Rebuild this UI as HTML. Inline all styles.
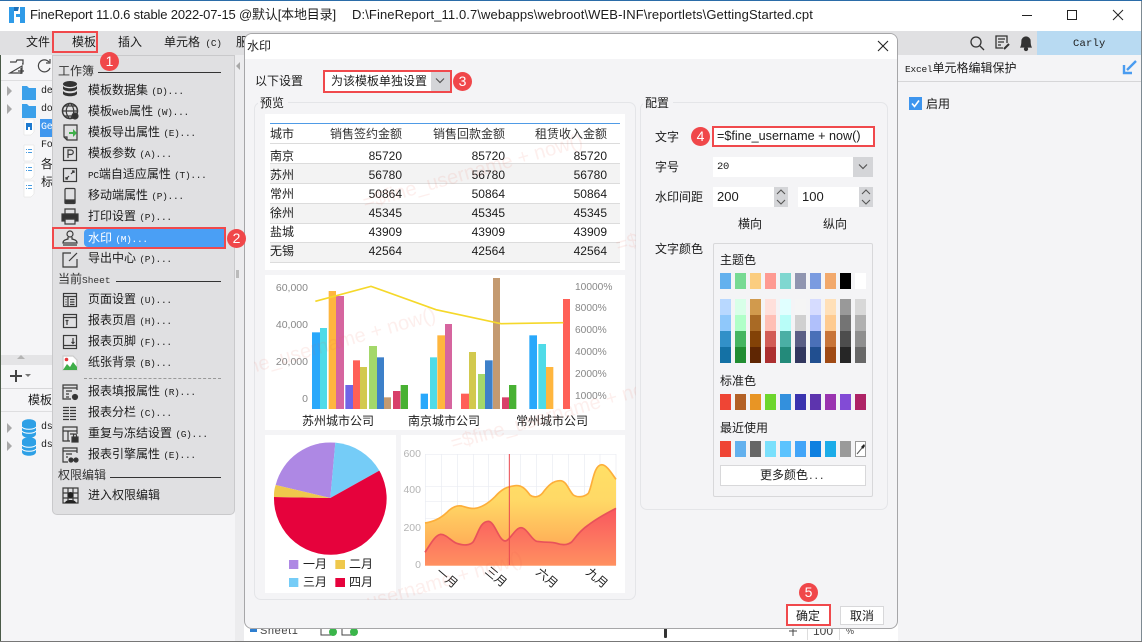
<!DOCTYPE html>
<html lang="zh"><head><meta charset="utf-8"><title>FineReport</title>
<style>
*{box-sizing:border-box;margin:0;padding:0}
html,body{width:1142px;height:642px;overflow:hidden;background:#fff}
body{position:relative;font:12px/14px "Liberation Sans","Noto Sans CJK SC",sans-serif;color:#1c1c1c}
.a{position:absolute}
.t{position:absolute;white-space:nowrap;line-height:14px}
.m{font-family:"Liberation Mono","Noto Sans CJK SC",monospace;font-size:9.5px;letter-spacing:-.3px}
.red{position:absolute;border:2px solid #f0494c}
.c{position:absolute;width:19px;height:19px;border-radius:50%;background:#f0474a;color:#fff;font-size:14px;line-height:19px;text-align:center}
.sw{position:absolute;left:720px;display:flex;gap:4px}
.sw i{display:block;width:11px;height:16px}
.tr{position:absolute;left:270px;width:350px;border-bottom:1px solid #dcdcdc}
.n{position:absolute;white-space:nowrap;text-align:right;width:60px}
.g{background:#f3f3f3}
.ax{font-size:10.5px;color:#888}
.ar{font-size:10.2px;color:#888}
.ay{font-size:10.5px;color:#b4b4b4}
svg{position:absolute;display:block}
</style></head><body>

<!-- window -->
<div class="a" style="left:0;top:0;width:1142px;height:1px;background:#2b6ca8"></div>
<div class="a" style="left:0;top:31px;width:1142px;height:24px;background:#e0e0e2"></div>
<div class="a" style="left:1037px;top:31px;width:104px;height:24px;background:#b8daf2"></div>
<div class="a" style="left:1141px;top:1px;width:1px;height:641px;background:#7d8a92"></div>
<div class="a" style="left:0;top:55px;width:1px;height:587px;background:#4a5a48"></div>

<svg style="left:8px;top:6px" width="18" height="18" viewBox="0 0 18 18"><path d="M1 1h5v16H1z" fill="#2f9be8"/><path d="M6 1h5l-1 4H6z" fill="#1c6fb8"/><path d="M12 1h5v16h-5v-6H8V8h4z" fill="#2f9be8"/></svg>
<div class="t" style="left:30px;top:8px;font-size:13px;letter-spacing:-.17px">FineReport 11.0.6 stable 2022-07-15 @默认[本地目录]</div>
<div class="t" style="left:352px;top:8px;font-size:13px;letter-spacing:.1px">D:\FineReport_11.0.7\webapps\webroot\WEB-INF\reportlets\GettingStarted.cpt</div>
<svg style="left:1015px;top:6px" width="115" height="18" viewBox="0 0 115 18" fill="none" stroke="#222" stroke-width="1"><path d="M7 9.5h10"/><rect x="52.5" y="4.500" width="9" height="9"/><path d="M98 4l10 10M108 4l-10 10"/></svg>

<div class="t" style="left:26px;top:35px">文件</div>
<div class="t" style="left:72px;top:35px">模板</div>
<div class="t" style="left:118px;top:35px">插入</div>
<div class="t" style="left:164px;top:35px">单元格<span class="m"> (C)</span></div>
<div class="t" style="left:236px;top:35px">服</div>

<svg style="left:968px;top:33px" width="65" height="20" viewBox="0 0 65 20" fill="none" stroke="#333" stroke-width="1.300"><circle cx="8" cy="9" r="5"/><path d="M12 13l4 4"/><path d="M35 15h-7V3h11v7M30 6h7M30 9h6M30 12h3"/><path d="M36 16l5-5" stroke-width="2"/><path d="M53 14c1-2 1-3 1-6a4 4 0 0 1 8 0c0 3 0 4 1 6z" fill="#333"/><circle cx="58" cy="16" r="1.500" fill="#333"/></svg>
<div class="t m" style="left:1073px;top:37px;font-size:10.5px;letter-spacing:.2px">Carly</div>

<!-- right panel -->
<div class="a" style="left:898px;top:55px;width:243px;height:587px;background:#f4f4f6"></div>
<div class="a" style="left:898px;top:81px;width:243px;height:1px;background:#d6d6d8"></div>
<div class="t" style="left:905px;top:61px"><span class="m" style="letter-spacing:-.2px">Excel</span>单元格编辑保护</div>
<svg style="left:1122px;top:60px" width="16" height="15" viewBox="0 0 16 15"><path d="M14 1L5 10M2 5v8h8" fill="none" stroke="#4a9cf0" stroke-width="2.400"/></svg>
<svg style="left:909px;top:97px" width="13" height="13" viewBox="0 0 13 13"><rect width="13" height="13" fill="#3d95ee"/><path d="M3 6.500l2.500 3L10 3.500" fill="none" stroke="#fff" stroke-width="1.600"/></svg>
<div class="t" style="left:926px;top:97px">启用</div>

<!-- left panel -->
<div class="a" style="left:1px;top:55px;width:243px;height:587px;background:#f5f5f7"></div>
<div class="a" style="left:235px;top:55px;width:9px;height:587px;background:#ececee"></div>
<svg style="left:235px;top:60px" width="9" height="300" viewBox="0 0 9 300"><path d="M5 2L1 6l4 4z" fill="#a8a8a8"/><path d="M1 210h3v8H1z" fill="#bbb"/></svg>
<div class="a" style="left:1px;top:80px;width:51px;height:1px;background:#dedee0"></div>
<div class="a" style="left:1px;top:355px;width:51px;height:10px;background:#e4e4e6"></div>
<div class="a" style="left:1px;top:388px;width:51px;height:1px;background:#d8d8da"></div>
<div class="a" style="left:1px;top:411px;width:51px;height:1px;background:#dedee0"></div>
<div class="a" style="left:40px;top:119px;width:12px;height:18px;background:#3f97ee"></div>
<svg style="left:0;top:55px" width="52" height="410" viewBox="0 0 52 410">
<g fill="none" stroke="#444" stroke-width="1.200"><path d="M10 7h6l1-2h6v4h-1M22 11v7H10z"/><path d="M21 13v6M18 16h6"/><path d="M49 7a6 6 0 1 0 1 6M50 4v4h-4"/></g>
<path d="M7 31l5 5-5 5zM7 49l5 5-5 5zM7 368l5 5-5 5zM7 386l5 5-5 5z" fill="#a8a8a8"/>
<path d="M22 31h5l2 2h7v12H22zM22 49h5l2 2h7v12H22z" fill="#3ba0ea"/>
<g fill="#fff" stroke="#ddd" stroke-width=".5"><path d="M24 64h10v13l-3 3h-7zM24 90h10v13l-3 3h-7zM24 108h10v13l-3 3h-7zM24 126h10v13l-3 3h-7z" transform="translate(0,0)"/></g>
<path d="M26 68h6v7h-2v-3h-2v3h-2z" fill="#1d7ad0"/>
<path d="M26 94h1v1h-1zM28 94h4v1h-4zM26 97h1v1h-1zM28 97h4v1h-4zM26 112h1v1h-1zM28 112h4v1h-4zM26 115h1v1h-1zM28 115h4v1h-4zM26 130h1v1h-1zM28 130h4v1h-4zM26 133h1v1h-1zM28 133h4v1h-4z" fill="#4a9ce0"/>
<path d="M10 321h12M16 315v12" stroke="#444" stroke-width="2" fill="none"/>
<path d="M25 319h6l-3 3z" fill="#777"/>
<path d="M22 368c0-5 14-5 14 0v11c0 5-14 5-14 0zM22 386c0-5 14-5 14 0v11c0 5-14 5-14 0z" fill="#2ea0e6"/>
<path d="M22 372c2 3 12 3 14 0M22 376c2 3 12 3 14 0M22 390c2 3 12 3 14 0M22 394c2 3 12 3 14 0" fill="none" stroke="#fff"/>
<path d="M17 304l4-4 4 4z" fill="#b4b4b4"/>
</svg>
<div class="t m" style="left:41px;top:85px;font-size:10px">de</div>
<div class="t m" style="left:41px;top:103px;font-size:10px">do</div>
<div class="t m" style="left:41px;top:121px;font-size:10px;color:#fff">Ge</div>
<div class="t m" style="left:41px;top:139px;font-size:10px">Fo</div>
<div class="t" style="left:41px;top:157px">各</div>
<div class="t" style="left:41px;top:175px">标</div>
<div class="t" style="left:28px;top:393px">模板</div>
<div class="t m" style="left:41px;top:421px;font-size:10px">ds</div>
<div class="t m" style="left:41px;top:439px;font-size:10px">ds</div>

<!-- bottom strip -->
<div class="a" style="left:244px;top:628px;width:654px;height:13px;background:#fff"></div>
<div class="a" style="left:0;top:641px;width:1142px;height:1px;background:#777"></div>
<div class="a" style="left:250px;top:629px;width:7px;height:3px;background:#2f7fd0"></div>
<div class="t" style="left:260px;top:624px;font-size:11px;color:#444;letter-spacing:.6px">Sheet1</div>
<svg style="left:318px;top:628px" width="560" height="13" viewBox="0 0 560 13"><g fill="none" stroke="#444"><rect x="3" y="0" width="10" height="7"/><rect x="24" y="0" width="10" height="7"/></g><circle cx="15" cy="4" r="4" fill="#3ab54a"/><circle cx="36" cy="4" r="4" fill="#3ab54a"/><rect x="346" y="0" width="3" height="10" rx="1" fill="#333"/><path d="M475 0v8M471 3h8" stroke="#444"/></svg>
<div class="a" style="left:807px;top:628px;width:33px;height:12px;background:#fff;border-left:1px solid #ddd;border-right:1px solid #ddd"></div>
<div class="t" style="left:813px;top:624px;color:#444">100</div>
<div class="t" style="left:846px;top:624px;font-size:9px;color:#444">%</div>

<!-- menu -->
<div class="a" style="left:52px;top:55px;width:183px;height:460px;background:#e0e0e2;border:1px solid #c9c9cb;border-radius:0 0 5px 5px"></div>
<div class="a" style="left:84px;top:229px;width:140px;height:18px;background:#4a9ff5;border-radius:4px 0 0 4px"></div>
<div class="t" style="left:58px;top:64px;color:#333">工作簿</div><div class="a" style="left:98px;top:72px;width:123px;height:1px;background:#333"></div>
<div class="t" style="left:58px;top:272px;color:#333">当前<span class="m" style="letter-spacing:0">Sheet</span></div><div class="a" style="left:116px;top:281px;width:105px;height:1px;background:#333"></div>
<div class="a" style="left:84px;top:378px;width:137px;height:0;border-top:1px dashed #999"></div>
<div class="t" style="left:58px;top:468px;color:#333">权限编辑</div><div class="a" style="left:110px;top:477px;width:111px;height:1px;background:#333"></div>

<div class="t" style="left:88px;top:83px">模板数据集 <span class="m">(D)...</span></div>
<div class="t" style="left:88px;top:104px">模板<span class="m" style="letter-spacing:0">Web</span>属性 <span class="m">(W)...</span></div>
<div class="t" style="left:88px;top:125px">模板导出属性 <span class="m">(E)...</span></div>
<div class="t" style="left:88px;top:146px">模板参数 <span class="m">(A)...</span></div>
<div class="t" style="left:88px;top:167px"><span class="m">PC</span>端自适应属性 <span class="m">(T)...</span></div>
<div class="t" style="left:88px;top:188px">移动端属性 <span class="m">(P)...</span></div>
<div class="t" style="left:88px;top:209px">打印设置 <span class="m">(P)...</span></div>
<div class="t" style="left:88px;top:231px;color:#fff">水印 <span class="m">(M)...</span></div>
<div class="t" style="left:88px;top:251px">导出中心 <span class="m">(P)...</span></div>
<div class="t" style="left:88px;top:292px">页面设置 <span class="m">(U)...</span></div>
<div class="t" style="left:88px;top:313px">报表页眉 <span class="m">(H)...</span></div>
<div class="t" style="left:88px;top:334px">报表页脚 <span class="m">(F)...</span></div>
<div class="t" style="left:88px;top:355px">纸张背景 <span class="m">(B)...</span></div>
<div class="t" style="left:88px;top:384px">报表填报属性 <span class="m">(R)...</span></div>
<div class="t" style="left:88px;top:405px">报表分栏 <span class="m">(C)...</span></div>
<div class="t" style="left:88px;top:426px">重复与冻结设置 <span class="m">(G)...</span></div>
<div class="t" style="left:88px;top:447px">报表引擎属性 <span class="m">(E)...</span></div>
<div class="t" style="left:88px;top:488px">进入权限编辑</div>

<svg style="left:60px;top:80px" width="22" height="425" viewBox="0 0 22 425" fill="none" stroke="#3a3a3a" stroke-width="1.200">
<g fill="#333" stroke="none"><ellipse cx="10" cy="4" rx="7" ry="3"/><path d="M3 6c2 3 12 3 14 0v3c-2 3-12 3-14 0zM3 11c2 3 12 3 14 0v3c-2 3-12 3-14 0z"/></g>
<g transform="translate(0,21)"><circle cx="10" cy="10" r="7.500" stroke-width="1.500"/><path d="M2 10h16M10 2c-5 5-5 11 0 16M10 2c5 5 5 11 0 16M4 5h12M4 15h12"/><circle cx="15" cy="15" r="3" fill="#333"/></g>
<g transform="translate(0,43)"><path d="M4 2h13v15H7l-3-3zM4 14h3v3"/><path d="M9 9h4V6l4 4-4 4v-3H9z" fill="#3fb04a" stroke="none"/></g>
<g transform="translate(0,64)"><rect x="3.500" y="3.500" width="13" height="13"/><path d="M8 14V6h3a2 2 0 0 1 0 4.500H8"/></g>
<g transform="translate(0,85)"><rect x="3.500" y="3.500" width="13" height="13"/><path d="M11 9l3-3M12 6h2v2M9 11l-3 3M6 12v2h2"/></g>
<g transform="translate(0,106)"><rect x="5" y="2.500" width="10" height="15" rx="1"/><path d="M5 14h10v3H5z" fill="#333"/></g>
<g transform="translate(0,127)"><path d="M5 2h10v5H5z"/><path d="M2 7h16v7h-3v-2H5v2H2z" fill="#333"/><path d="M5 12h10v5H5z"/></g>
<g transform="translate(0,149)"><circle cx="10" cy="5" r="3"/><path d="M8 8v2c-4 1-5 2-5 4h14c0-2-1-3-5-4V8M3 16h14"/></g>
<g transform="translate(0,170)"><path d="M17 9v8H3V3h8M9 11l8-8"/></g>
<g transform="translate(0,210)"><rect x="3.500" y="3.500" width="13" height="13"/><path d="M3.500 6.500h13M8 6.500v10M10 9.500h4.500M10 12h4.500M10 14.500h4.500M5.500 9.500h1M5.500 12h1M5.500 14.500h1"/></g>
<g transform="translate(0,231)"><rect x="3.500" y="3.500" width="13" height="13"/><path d="M3.500 6.500h13M7 9v5M5.500 9.500h3"/></g>
<g transform="translate(0,252)"><rect x="3.500" y="3.500" width="13" height="13"/><path d="M3.500 13.500h13M13 6v5M11.500 10l1.500 1.500 1.500-1.500"/></g>
<g transform="translate(0,273)"><path d="M3 3h10l4 4v10H3z" fill="#fff" stroke="#ccc"/><circle cx="6.500" cy="6.500" r="1.800" fill="#e5383b" stroke="none"/><path d="M3 17l4-6 3 3 3-5 4 5v3z" fill="#3fae49" stroke="none"/></g>
<g transform="translate(0,302)"><path d="M17 8V3H3v14h8M3 6h14M6 9h6M6 12h3M6 15h3"/><circle cx="15" cy="15" r="2.500" fill="#333"/></g>
<g transform="translate(0,323)"><path d="M3 4.500h14M3 7.500h14M3 10.500h14M3 13.500h14M3 16.500h14" stroke-dasharray="6 1"/></g>
<g transform="translate(0,344)"><path d="M10 17H3V3h14v7M3 7h14M8 7v10M10 10h4"/><rect x="12" y="13" width="6" height="5" fill="#333"/><path d="M13.500 13v-1.500a1.500 1.500 0 0 1 3 0V13"/></g>
<g transform="translate(0,365)"><path d="M17 8V3H3v14h5M3 6h14M6 9h6M6 12h2"/><circle cx="11" cy="15" r="2" fill="#333"/><circle cx="16" cy="15" r="2" fill="#333"/></g>
<g transform="translate(0,405)"><path d="M3 3h15v15H3zM3 8h15M3 13h15M8 3v15M13 3v15"/><circle cx="10.500" cy="10" r="3" fill="#222" stroke="none"/><path d="M5 18c0-4 11-4 11 0z" fill="#222" stroke="none"/></g>
</svg>

<!-- dialog -->
<div class="a" style="left:244px;top:33px;width:654px;height:596px;background:#f4f4f6;border:1px solid #a6a6a8;border-radius:8px;overflow:hidden"><div style="height:25px;background:#fff"></div></div>
<div class="t" style="left:247px;top:39px">水印</div>
<svg style="left:877px;top:40px" width="12" height="12" viewBox="0 0 12 12"><path d="M1 1l10 10M11 1L1 11" stroke="#222" stroke-width="1.100"/></svg>

<div class="t" style="left:255px;top:74px">以下设置</div>
<div class="a" style="left:325px;top:71px;width:125px;height:20px;background:#fff"></div>
<div class="a" style="left:431px;top:71px;width:19px;height:20px;background:#d4d5d8"></div>
<svg style="left:434px;top:77px" width="12" height="8" viewBox="0 0 12 8"><path d="M2 1.500l4 4 4-4" fill="none" stroke="#555" stroke-width="1.200"/></svg>
<div class="t" style="left:331px;top:74px">为该模板单独设置</div>
<div class="red" style="left:323px;top:70px;width:129px;height:23px"></div>

<!-- preview fieldset -->
<div class="a" style="left:254px;top:102px;width:382px;height:498px;border:1px solid #e4e5e8;border-radius:7px"></div>
<div class="a" style="left:258px;top:98px;width:30px;height:8px;background:#f4f4f6"></div>
<div class="t" style="left:260px;top:96px">预览</div>
<div class="a" style="left:265px;top:114px;width:360px;height:156px;background:#fff"></div>
<div class="a" style="left:265px;top:275px;width:360px;height:155px;background:#fff"></div>
<div class="a" style="left:265px;top:435px;width:131px;height:158px;background:#fff"></div>
<div class="a" style="left:401px;top:435px;width:224px;height:158px;background:#fff"></div>

<!-- table -->
<div class="tr" style="top:124px;height:20px"></div>
<div class="tr" style="top:144px;height:20px"></div>
<div class="tr g" style="top:164px;height:20px"></div>
<div class="tr" style="top:184px;height:20px"></div>
<div class="tr g" style="top:204px;height:20px"></div>
<div class="tr" style="top:224px;height:19px"></div>
<div class="tr g" style="top:243px;height:20px"></div>
<div class="a" style="left:270px;top:123px;width:350px;height:1px;background:#4f9be6"></div>
<div class="t" style="left:270px;top:127px;color:#222">城市</div>
<div class="n" style="left:322px;top:127px;width:80px;color:#333">销售签约金额</div>
<div class="n" style="left:425px;top:127px;width:80px;color:#333">销售回款金额</div>
<div class="n" style="left:527px;top:127px;width:80px;color:#333">租赁收入金额</div>
<div class="t" style="left:270px;top:149px">南京</div><div class="n" style="left:342px;top:149px">85720</div><div class="n" style="left:445px;top:149px">85720</div><div class="n" style="left:547px;top:149px">85720</div>
<div class="t" style="left:270px;top:168px">苏州</div><div class="n" style="left:342px;top:168px">56780</div><div class="n" style="left:445px;top:168px">56780</div><div class="n" style="left:547px;top:168px">56780</div>
<div class="t" style="left:270px;top:187px">常州</div><div class="n" style="left:342px;top:187px">50864</div><div class="n" style="left:445px;top:187px">50864</div><div class="n" style="left:547px;top:187px">50864</div>
<div class="t" style="left:270px;top:206px">徐州</div><div class="n" style="left:342px;top:206px">45345</div><div class="n" style="left:445px;top:206px">45345</div><div class="n" style="left:547px;top:206px">45345</div>
<div class="t" style="left:270px;top:225px">盐城</div><div class="n" style="left:342px;top:225px">43909</div><div class="n" style="left:445px;top:225px">43909</div><div class="n" style="left:547px;top:225px">43909</div>
<div class="t" style="left:270px;top:244px">无锡</div><div class="n" style="left:342px;top:244px">42564</div><div class="n" style="left:445px;top:244px">42564</div><div class="n" style="left:547px;top:244px">42564</div>

<!-- bar chart -->
<svg style="left:255px;top:270px" width="380" height="170" viewBox="0 0 1140 510">
<g>
<rect x="171" y="187" width="24" height="230" fill="#29a8fb"/><rect x="195" y="174" width="21" height="243" fill="#4fdbe8"/><rect x="221" y="63" width="22" height="354" fill="#ffb63e"/><rect x="243" y="78" width="24" height="339" fill="#d6659f"/><rect x="271" y="345" width="23" height="72" fill="#7064e6"/><rect x="294" y="271" width="21" height="146" fill="#ff6057"/><rect x="315" y="291" width="21" height="126" fill="#d2c94e"/><rect x="342" y="228" width="24" height="189" fill="#a4d86a"/><rect x="366" y="262" width="21" height="155" fill="#3d80c9"/><rect x="387" y="382" width="21" height="35" fill="#c49a70"/><rect x="414" y="363" width="22" height="54" fill="#d84069"/><rect x="437" y="345" width="22" height="72" fill="#48b133"/>
<rect x="497" y="371" width="22" height="46" fill="#29a8fb"/><rect x="525" y="262" width="21" height="155" fill="#4fdbe8"/><rect x="547" y="196" width="23" height="221" fill="#ffb63e"/><rect x="570" y="162" width="21" height="255" fill="#d6659f"/><rect x="618" y="371" width="24" height="46" fill="#ff6057"/><rect x="642" y="246" width="21" height="171" fill="#d2c94e"/><rect x="669" y="312" width="21" height="105" fill="#a4d86a"/><rect x="690" y="271" width="23" height="146" fill="#3d80c9"/><rect x="714" y="24" width="21" height="393" fill="#c49a70"/><rect x="741" y="382" width="21" height="35" fill="#d84069"/><rect x="762" y="345" width="22" height="72" fill="#48b133"/>
<rect x="823" y="196" width="23" height="221" fill="#29a8fb"/><rect x="850" y="222" width="23" height="195" fill="#4fdbe8"/><rect x="873" y="291" width="22" height="126" fill="#ffb63e"/><rect x="924" y="87" width="21" height="330" fill="#ff6057"/>
<path d="M181 94L348 49L543 119L738 161L925 158" fill="none" stroke="#f5d82a" stroke-width="5"/>
</g></svg>
<div class="n ax" style="left:248px;top:281px">60,000</div>
<div class="n ax" style="left:248px;top:318px">40,000</div>
<div class="n ax" style="left:248px;top:355px">20,000</div>
<div class="n ax" style="left:248px;top:392px">0</div>
<div class="t ar" style="left:575px;top:281px">10000%</div>
<div class="t ar" style="left:575px;top:302px">8000%</div>
<div class="t ar" style="left:575px;top:324px">6000%</div>
<div class="t ar" style="left:575px;top:346px">4000%</div>
<div class="t ar" style="left:575px;top:368px">2000%</div>
<div class="t ar" style="left:575px;top:390px">1000%</div>
<div class="t" style="left:302px;top:414px">苏州城市公司</div>
<div class="t" style="left:408px;top:414px">南京城市公司</div>
<div class="t" style="left:516px;top:414px">常州城市公司</div>

<!-- pie + area -->
<svg style="left:255px;top:430px" width="380" height="170" viewBox="0 0 1140 510">
<defs>
<linearGradient id="y" x1="0" y1="0" x2="0" y2="1"><stop offset="0" stop-color="#ffe066"/><stop offset=".35" stop-color="#ffd966"/><stop offset="1" stop-color="#ff9a50"/></linearGradient>
<linearGradient id="r" x1="0" y1="0" x2="0" y2="1"><stop offset="0" stop-color="#f9575f"/><stop offset="1" stop-color="#ff9060"/></linearGradient>
</defs>
<path d="M226 204L62 165A169 169 0 0 1 241 38Z" fill="#ae88e4"/>
<path d="M226 204L241 38A169 169 0 0 1 373 122Z" fill="#75ccf7"/>
<path d="M226 204L373 122A169 169 0 1 1 57 201Z" fill="#e6023c"/>
<path d="M226 204L57 201Q56 182 62 165Z" fill="#efc84c"/>
<rect x="102" y="390" width="28" height="27" fill="#ae88e4"/><rect x="241" y="390" width="29" height="27" fill="#efc84c"/><rect x="102" y="444" width="28" height="27" fill="#75ccf7"/><rect x="241" y="444" width="29" height="27" fill="#e6023c"/>
<g stroke="#e9ecf2" stroke-width="2" fill="none"><path d="M511 73H1083V405H511zM559 73V405M607 73V405M655 73V405M701 73V405M749 73V405M797 73V405M845 73V405M893 73V405M941 73V405M989 73V405M1035 73V405M511 170H1083M511 215H1083M511 265H1083"/></g>
<path d="M510 279C540 275 560 262 575 248C590 232 605 225 620 228C635 232 645 237 660 235C680 232 700 220 720 200C740 178 755 170 780 167C800 165 810 175 825 195C835 203 850 203 862 190C880 165 895 152 915 152C935 152 940 180 955 195C965 202 985 203 1000 190C1012 170 1015 105 1040 104C1055 104 1070 130 1083 148L1083 407L510 407Z" fill="url(#y)"/>
<path d="M510 279C540 275 560 262 575 248C590 232 605 225 620 228C635 232 645 237 660 235C680 232 700 220 720 200C740 178 755 170 780 167C800 165 810 175 825 195C835 203 850 203 862 190C880 165 895 152 915 152C935 152 940 180 955 195C965 202 985 203 1000 190C1012 170 1015 105 1040 104C1055 104 1070 130 1083 148" fill="none" stroke="#fdae3a" stroke-width="5"/>
<path d="M510 367C525 345 540 315 557 313C575 313 590 335 605 340C625 347 645 347 655 335C670 310 675 275 700 274C720 275 730 330 750 333C765 333 780 293 798 293C815 293 830 330 845 334C870 338 890 335 905 340C925 347 945 345 955 330C970 310 985 295 1000 285C1030 262 1060 247 1083 235L1083 407L510 407Z" fill="url(#r)"/>
<path d="M510 367C525 345 540 315 557 313C575 313 590 335 605 340C625 347 645 347 655 335C670 310 675 275 700 274C720 275 730 330 750 333C765 333 780 293 798 293C815 293 830 330 845 334C870 338 890 335 905 340C925 347 945 345 955 330C970 310 985 295 1000 285C1030 262 1060 247 1083 235" fill="none" stroke="#e8525a" stroke-width="5"/>
<path d="M763 72V405" stroke="#e8474f" stroke-width="3"/>
</svg>
<div class="t" style="left:303px;top:557px">一月</div><div class="t" style="left:349px;top:557px">二月</div>
<div class="t" style="left:303px;top:575px">三月</div><div class="t" style="left:349px;top:575px">四月</div>
<div class="n ay" style="left:361px;top:447px">600</div>
<div class="n ay" style="left:361px;top:483px">400</div>
<div class="n ay" style="left:361px;top:521px">200</div>
<div class="n ay" style="left:361px;top:558px">0</div>
<div class="t" style="left:435px;top:571px;transform:rotate(40deg)">一月</div>
<div class="t" style="left:484px;top:570px;transform:rotate(40deg)">三月</div>
<div class="t" style="left:535px;top:571px;transform:rotate(40deg)">六月</div>
<div class="t" style="left:585px;top:571px;transform:rotate(40deg)">九月</div>

<!-- watermark -->
<svg style="left:254px;top:102px" width="382" height="498" viewBox="254 102 382 498">
<g font-family="Liberation Sans,sans-serif" font-size="20" fill="#f0604a" fill-opacity=".1">
<text x="365" y="209" transform="rotate(-16 365 209)">=$fine_username + now()</text>
<text x="218" y="383" transform="rotate(-16 218 383)">=$fine_username + now()</text>
<text x="453" y="450" transform="rotate(-16 453 450)">=$fine_username + now()</text>
<text x="618" y="252" transform="rotate(-16 618 252)">=$fine</text>
<text x="305" y="627" transform="rotate(-16 305 627)">=$fine_username + now()</text>
</g></svg>

<!-- config -->
<div class="a" style="left:640px;top:102px;width:248px;height:408px;border:1px solid #e4e5e8;border-radius:7px"></div>
<div class="a" style="left:643px;top:98px;width:30px;height:8px;background:#f4f4f6"></div>
<div class="t" style="left:645px;top:96px">配置</div>
<div class="t" style="left:655px;top:130px">文字</div>
<div class="a" style="left:712px;top:126px;width:163px;height:21px;background:#fff"></div>
<div class="t" style="left:717px;top:129px;font-size:12.6px">=$fine_username + now()</div>
<div class="red" style="left:712px;top:126px;width:163px;height:21px"></div>
<div class="t" style="left:655px;top:160px">字号</div>
<div class="a" style="left:713px;top:157px;width:160px;height:20px;background:#fff"></div>
<div class="a" style="left:853px;top:157px;width:20px;height:20px;background:#d4d5d8"></div>
<svg style="left:857px;top:163px" width="12" height="8" viewBox="0 0 12 8"><path d="M2 1.500l4 4 4-4" fill="none" stroke="#555" stroke-width="1.200"/></svg>
<div class="t m" style="left:717px;top:160px;font-size:10.500px">20</div>
<div class="t" style="left:655px;top:190px">水印间距</div>
<div class="a" style="left:713px;top:187px;width:75px;height:20px;background:#fff"></div>
<div class="a" style="left:774px;top:187px;width:14px;height:20px;background:#d4d5d8"></div>
<div class="a" style="left:798px;top:187px;width:75px;height:20px;background:#fff"></div>
<div class="a" style="left:859px;top:187px;width:14px;height:20px;background:#d4d5d8"></div>
<svg style="left:774px;top:187px" width="99" height="20" viewBox="0 0 99 20"><path d="M3 7l4-4 4 4M3 13l4 4 4-4M88 7l4-4 4 4M88 13l4 4 4-4" fill="none" stroke="#555" stroke-width="1.100"/></svg>
<div class="t" style="left:717px;top:190px;font-size:13px">200</div>
<div class="t" style="left:802px;top:190px;font-size:13px">100</div>
<div class="t" style="left:738px;top:217px">横向</div>
<div class="t" style="left:823px;top:217px">纵向</div>
<div class="t" style="left:655px;top:242px">文字颜色</div>

<div class="a" style="left:713px;top:243px;width:160px;height:254px;border:1px solid #d8d8da;border-radius:2px"></div>
<div class="t" style="left:720px;top:253px">主题色</div>
<div class="sw" style="top:273px"><i style="background:#63b1ee"></i><i style="background:#77da93"></i><i style="background:#fbcd7f"></i><i style="background:#fe9a92"></i><i style="background:#7fd7d0"></i><i style="background:#9095b0"></i><i style="background:#7a9be0"></i><i style="background:#f2a96c"></i><i style="background:#000"></i><i style="background:#fff"></i></div>
<div class="sw" style="top:299px"><i style="background:#b8d8ff"></i><i style="background:#d8ffe8"></i><i style="background:#d19a4d"></i><i style="background:#ffe0db"></i><i style="background:#e0ffff"></i><i style="background:#f5f5f5"></i><i style="background:#d6dcff"></i><i style="background:#ffe0b8"></i><i style="background:#999"></i><i style="background:#d8d8d8"></i></div>
<div class="sw" style="top:315px"><i style="background:#8fc8fb"></i><i style="background:#b0ffc8"></i><i style="background:#a96a25"></i><i style="background:#ffbfb5"></i><i style="background:#b8fdf8"></i><i style="background:#d0d0d0"></i><i style="background:#b0c0fb"></i><i style="background:#fecb90"></i><i style="background:#747474"></i><i style="background:#b0b0b0"></i></div>
<div class="sw" style="top:331px"><i style="background:#3290c8"></i><i style="background:#45b560"></i><i style="background:#834207"></i><i style="background:#d25c56"></i><i style="background:#4aafa5"></i><i style="background:#5a5e85"></i><i style="background:#4a70b8"></i><i style="background:#c87539"></i><i style="background:#4d4d4d"></i><i style="background:#8f8f8f"></i></div>
<div class="sw" style="top:347px"><i style="background:#1471a5"></i><i style="background:#218d32"></i><i style="background:#5f2603"></i><i style="background:#ac2f30"></i><i style="background:#238a7a"></i><i style="background:#32375f"></i><i style="background:#214f90"></i><i style="background:#a04a14"></i><i style="background:#262626"></i><i style="background:#686868"></i></div>
<div class="t" style="left:720px;top:374px">标准色</div>
<div class="sw" style="top:394px"><i style="background:#ef4535"></i><i style="background:#b36126"></i><i style="background:#e89525"></i><i style="background:#6dd62d"></i><i style="background:#3390dd"></i><i style="background:#3a33ae"></i><i style="background:#5d34ae"></i><i style="background:#9a34b0"></i><i style="background:#824bd6"></i><i style="background:#ae2366"></i></div>
<div class="t" style="left:720px;top:421px">最近使用</div>
<div class="sw" style="top:441px"><i style="background:#ef4535"></i><i style="background:#63b1ee"></i><i style="background:#666"></i><i style="background:#7ae0fc"></i><i style="background:#5cc3fe"></i><i style="background:#42a5f8"></i><i style="background:#0f80e0"></i><i style="background:#1cace8"></i><i style="background:#9a9a9a"></i><i style="background:#fff"></i></div>
<svg style="left:855px;top:441px" width="11" height="16" viewBox="0 0 11 16"><rect x=".5" y=".5" width="10" height="15" fill="#fff" stroke="#999"/><path d="M2 13l5-6" stroke="#555"/><path d="M6 6l3-3 1 2-2 3z" fill="#222"/></svg>
<div class="a" style="left:720px;top:465px;width:146px;height:21px;background:#fff;border:1px solid #d8d8da"></div>
<div class="t" style="left:760px;top:468px">更多颜色<span class="m">...</span></div>

<!-- buttons -->
<div class="a" style="left:788px;top:606px;width:41px;height:18px;background:#fff"></div>
<div class="t" style="left:796px;top:609px">确定</div>
<div class="red" style="left:786px;top:604px;width:45px;height:22px"></div>
<div class="a" style="left:840px;top:606px;width:44px;height:19px;background:#fff;border:1px solid #d8d8da"></div>
<div class="t" style="left:850px;top:609px">取消</div>

<!-- callouts -->
<div class="red" style="left:52px;top:31px;width:46px;height:22px"></div>
<div class="red" style="left:52px;top:227px;width:174px;height:22px"></div>
<div class="c" style="left:100px;top:52px">1</div>
<div class="c" style="left:227px;top:229px">2</div>
<div class="c" style="left:453px;top:72px">3</div>
<div class="c" style="left:691px;top:127px">4</div>
<div class="c" style="left:799px;top:583px">5</div>
</body></html>
